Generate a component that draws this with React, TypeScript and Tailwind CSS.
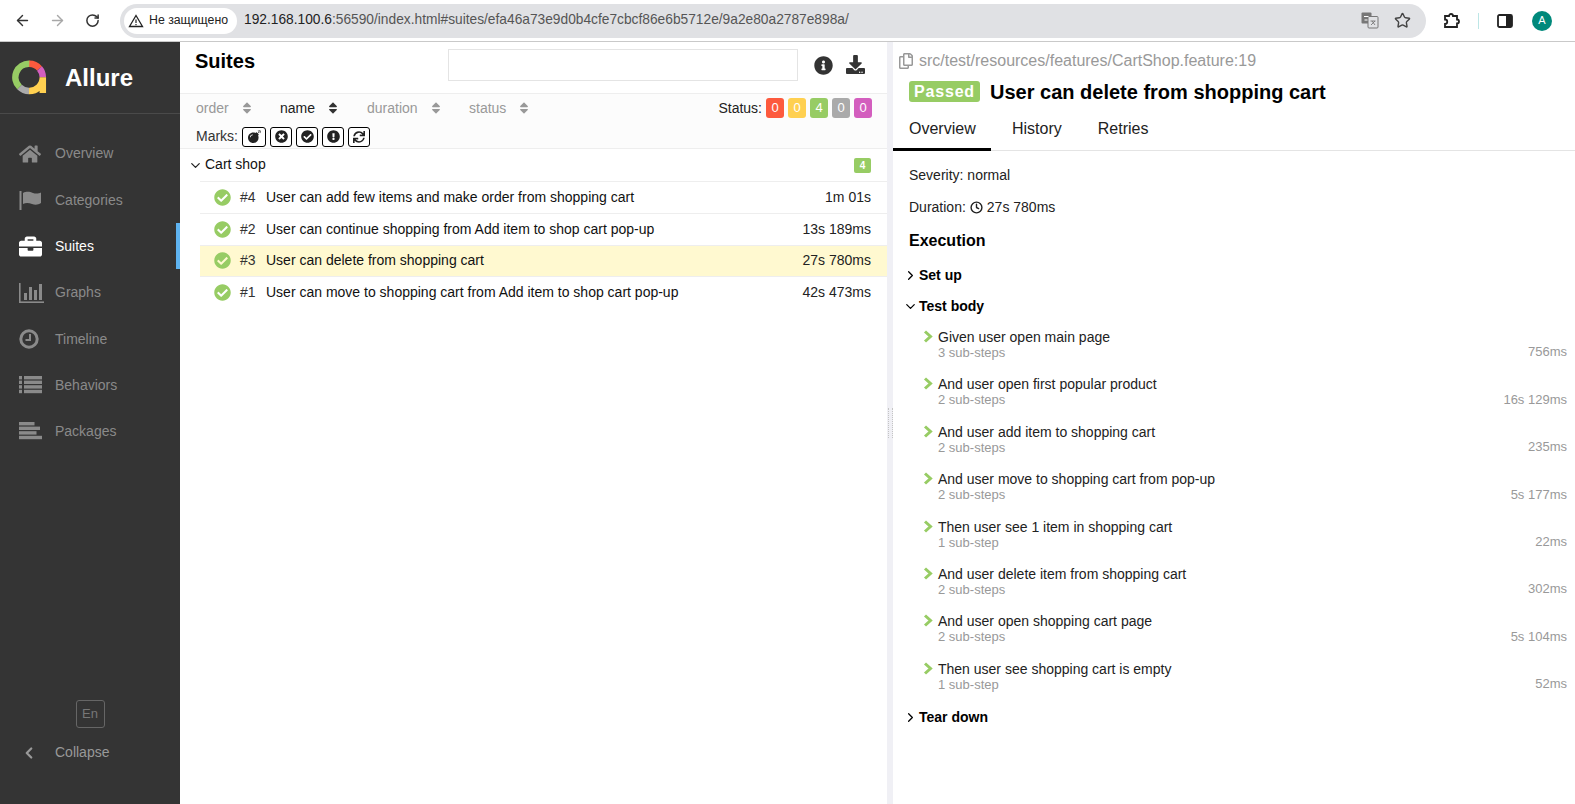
import React from "react";
import {
  FaHome, FaBriefcase, FaBomb, FaTimesCircle, FaCheckCircle, FaExclamationCircle, FaSync, FaInfoCircle,
  FaDownload, FaRegCopy, FaSort,
} from "react-icons/fa";
import { ArrowLeft, ArrowRight, RotateCw, Star, ChevronDown, ChevronRight, ChevronLeft, Clock } from "lucide-react";

const IconFlag = () => (
  <svg width="23" height="19" viewBox="0 0 23 19" fill="currentColor">
    <rect x="0.5" y="0" width="2" height="19" />
    <path d="M4 2 C8 0 11 1 14 2 C17 3 20 2.5 22 1.5 V12 C19 14 16 14 13 13 C10 12 7 11.5 4 13 Z" />
  </svg>
);
const IconGraph = () => (
  <svg width="26" height="20" viewBox="0 0 26 20" fill="currentColor">
    <rect x="0" y="0" width="1.6" height="20" />
    <rect x="0" y="18.4" width="25" height="1.6" />
    <rect x="5" y="10" width="3" height="7" />
    <rect x="10" y="4" width="3" height="13" />
    <rect x="15" y="7" width="3" height="10" />
    <rect x="20" y="1" width="3" height="16" />
  </svg>
);
const IconClock = () => (
  <svg width="20" height="20" viewBox="0 0 20 20" fill="none" stroke="currentColor">
    <circle cx="10" cy="10" r="8.2" strokeWidth="3" />
    <path d="M11 5 V11 H6.5" strokeWidth="2" />
  </svg>
);
const IconList = () => (
  <svg width="23" height="18" viewBox="0 0 23 18" fill="currentColor">
    {[0, 4.6, 9.2, 13.8].map((y) => (
      <g key={y}>
        <rect x="0" y={y} width="3" height="3.4" />
        <rect x="5" y={y} width="18" height="3.4" />
      </g>
    ))}
  </svg>
);
const IconPackages = () => (
  <svg width="23" height="18" viewBox="0 0 23 18" fill="currentColor">
    <rect x="0" y="0" width="15.5" height="3.4" />
    <rect x="0" y="4.6" width="21" height="3.4" />
    <rect x="0" y="9.2" width="17.5" height="3.4" />
    <rect x="0" y="13.8" width="23" height="3.4" />
  </svg>
);

const nav = [
  { label: "Overview", icon: <FaHome size={22} />, h: "h-[47px]" },
  { label: "Categories", icon: <IconFlag />, h: "h-[46px]" },
  { label: "Suites", icon: <FaBriefcase size={23} />, h: "h-[46px]", active: true },
  { label: "Graphs", icon: <IconGraph />, h: "h-[47px]" },
  { label: "Timeline", icon: <IconClock />, h: "h-[46px]" },
  { label: "Behaviors", icon: <IconList />, h: "h-[46px]" },
  { label: "Packages", icon: <IconPackages />, h: "h-[46px]" },
];

const tests = [
  { id: "#4", name: "User can add few items and make order from shopping cart", time: "1m 01s" },
  { id: "#2", name: "User can continue shopping from Add item to shop cart pop-up", time: "13s 189ms" },
  { id: "#3", name: "User can delete from shopping cart", time: "27s 780ms", selected: true },
  { id: "#1", name: "User can move to shopping cart from Add item to shop cart pop-up", time: "42s 473ms" },
];

const steps = [
  { name: "Given user open main page", sub: "3 sub-steps", time: "756ms" },
  { name: "And user open first popular product", sub: "2 sub-steps", time: "16s 129ms" },
  { name: "And user add item to shopping cart", sub: "2 sub-steps", time: "235ms" },
  { name: "And user move to shopping cart from pop-up", sub: "2 sub-steps", time: "5s 177ms" },
  { name: "Then user see 1 item in shopping cart", sub: "1 sub-step", time: "22ms" },
  { name: "And user delete item from shopping cart", sub: "2 sub-steps", time: "302ms" },
  { name: "And user open shopping cart page", sub: "2 sub-steps", time: "5s 104ms" },
  { name: "Then user see shopping cart is empty", sub: "1 sub-step", time: "52ms" },
];

const statuses = [
  ["0", "bg-[#fd5a3e]"],
  ["0", "bg-[#ffd050]"],
  ["4", "bg-[#97cc64]"],
  ["0", "bg-[#aaaaaa]"],
  ["0", "bg-[#d35ebe]"],
];

function Logo() {
  return (
    <svg width="36" height="36" viewBox="0 0 36 36" fill="none">
      <g strokeWidth="6.5" fill="none">
        <path d="M17 3.8 A13.5 13.5 0 0 1 27.5 8.5" stroke="#fd5a3e" />
        <path d="M27.5 8.5 A13.5 13.5 0 0 1 30.8 17.3" stroke="#d35ebe" />
        <path d="M17 31 A13.5 13.5 0 0 1 7.5 27" stroke="#aaaaaa" />
        <path d="M7.5 27 A13.5 13.5 0 0 1 17.3 3.8" stroke="#97cc64" />
        <path d="M17 31 A13.5 13.5 0 0 0 30.8 17.3 V33" stroke="#ffd050" />
      </g>
    </svg>
  );
}

function Mark({ Icon, size = 13, w = "w-[22px]" }: { Icon: React.ComponentType<{ size?: number }>; size?: number; w?: string }) {
  return (
    <span className={`flex h-[20px] items-center justify-center rounded-[3px] border border-black bg-white text-[#222] ${w}`}>
      <Icon size={size} />
    </span>
  );
}

function Sort({ label, dark, w }: { label: string; dark?: boolean; w: string }) {
  return (
    <div className={`flex items-center ${w} ${dark ? "text-[#222]" : "text-[#999]"}`}>
      <span>{label}</span>
      <FaSort size={14} className={`ml-[11px] ${dark ? "text-[#333]" : "text-[#999]"}`} />
    </div>
  );
}

const StepChevron = () => (
  <svg width="11" height="13" viewBox="0 0 11 13" fill="none" className="mr-[4px] mt-[1px] shrink-0" stroke="#97cc64" strokeWidth="3">
    <path d="M2 1.5 L7.5 6.5 L2 11.5" />
  </svg>
);

export default function App() {
  return (
    <div className="flex h-[804px] w-[1575px] flex-col overflow-hidden bg-white font-['Liberation_Sans',Arial,sans-serif] text-[14px] text-[#111]">
      {/* Browser toolbar */}
      <div className="flex h-[42px] shrink-0 items-center border-b border-[#c9c9c9] bg-white">
        <ArrowLeft size={17} strokeWidth={2} className="ml-[14px] text-[#333]" />
        <ArrowRight size={17} strokeWidth={2} className="ml-[18px] text-[#a8a8a8]" />
        <RotateCw size={15} strokeWidth={2.4} className="ml-[19px] text-[#333]" />
        <div className="ml-[20px] flex h-[34px] w-[1306px] items-center rounded-full bg-[#e0e1e4] pl-[4px] pr-[15px]">
          <div className="flex h-[26px] w-[113px] items-center rounded-full bg-white pl-[4px] text-[12.3px] text-[#222]">
            <svg width="16" height="14" viewBox="0 0 16 14" fill="none" className="mr-[5px]">
              <path d="M8 1.5 L14.5 12.5 H1.5 Z" stroke="#222" strokeWidth="1.3" />
              <path d="M8 5.5 V9 M8 10 V11.2" stroke="#222" strokeWidth="1.2" />
            </svg>
            <span className="whitespace-nowrap">Не защищено</span>
          </div>
          <div className="ml-[7px] text-[13.75px] text-[#555] whitespace-nowrap">
            <span className="text-[#222]">192.168.100.6</span>:56590/index.html#suites/efa46a73e9d0b4cfe7cbcf86e6b5712e/9a2e80a2787e898a/
          </div>
          <div className="ml-auto flex items-center">
            <svg width="18" height="17" viewBox="0 0 18 17">
              <rect x="0.5" y="0.5" width="10" height="11" rx="1" fill="#777" />
              <rect x="7" y="4.5" width="10" height="11.5" rx="1" fill="#e0e1e4" stroke="#777" />
              <path d="M3 4.5h4.5M3.5 8h3" stroke="#fff" strokeWidth="1" />
              <path d="M9.5 9h5M10 13l4-4M11 9l3 4" stroke="#777" strokeWidth="0.9" fill="none" />
            </svg>
            <Star size={17} strokeWidth={2} className="ml-[15px] text-[#444]" />
          </div>
        </div>
        <svg width="18" height="18" viewBox="0 0 18 18" fill="none" className="ml-[16px]" stroke="#222" strokeWidth="1.8">
          <path d="M3 4h4a2 2 0 0 1 4 0h4v3.5a2 2 0 0 1 0 4V15H3v-3a2 2 0 0 0 0-4.5z" />
        </svg>
        <div className="ml-[18px] h-[16px] w-[1px] bg-[#bde6e6]" />
        <svg width="16" height="14" viewBox="0 0 16 14" className="ml-[18px]">
          <rect x="1" y="1" width="14" height="12" rx="1.5" fill="#fff" stroke="#222" strokeWidth="1.8" />
          <rect x="9" y="1" width="6" height="12" fill="#222" />
        </svg>
        <div className="ml-[19px] flex h-[20px] w-[20px] items-center justify-center rounded-full bg-[#00897b] text-[11px] text-white">A</div>
      </div>

      <div className="flex min-h-0 flex-1">
        {/* Sidebar */}
        <aside className="flex w-[180px] shrink-0 flex-col bg-[#343434]">
          <div className="flex h-[72px] items-center border-b border-[#4a4a4a] pl-[12px]">
            <Logo />
            <span className="ml-[17px] text-[24px] font-bold text-white">Allure</span>
          </div>
          <nav className="mt-[16px] flex flex-col">
            {nav.map(({ label, icon, h, active }) => (
              <div key={label} className={`relative flex items-center pl-[19px] ${h} ${active ? "text-white" : "text-[#8a8a8a]"}`}>
                <span className="flex w-[36px] items-center">{icon}</span>
                <span className="text-[14px]">{label}</span>
                {active && <span className="absolute right-0 top-0 h-full w-[4px] bg-[#5eb3f0]" />}
              </div>
            ))}
          </nav>
          <div className="mt-auto flex flex-col pb-[41px]">
            <div className="mx-auto flex h-[28px] w-[29px] items-center justify-center rounded-[3px] border border-[#666] text-[13px] text-[#777]">En</div>
            <div className="mt-[14px] flex items-center pl-[20px] text-[14px] text-[#999]">
              <ChevronLeft size={18} strokeWidth={3} />
              <span className="ml-[17px]">Collapse</span>
            </div>
          </div>
        </aside>

        {/* Left pane */}
        <section className="flex w-[707px] shrink-0 flex-col">
          <div className="flex h-[52px] border-b border-[#eeeeee]">
            <h2 className="ml-[15px] mt-[7px] text-[20px] font-bold leading-[24px] text-black">Suites</h2>
            <div className="ml-[193px] mt-[7px] h-[32px] w-[350px] border border-[#e4e4e4]" />
            <FaInfoCircle size={19} className="ml-[16px] mt-[14px] text-[#333]" />
            <FaDownload size={19} className="ml-[13px] mt-[13px] text-[#333]" />
          </div>
          <div className="flex h-[55px] flex-col border-b border-[#eeeeee] bg-[#fcfcfc] pl-[16px] pr-[15px]">
            <div className="flex h-[28px] items-center text-[14px]">
              <Sort label="order" w="w-[84px]" />
              <Sort label="name" dark w="w-[87px]" />
              <Sort label="duration" w="w-[102px]" />
              <Sort label="status" w="w-[100px]" />
              <div className="ml-auto flex items-center gap-[4px]">
                <span className="text-[#222]">Status:</span>
                {statuses.map(([n, c], i) => (
                  <span key={i} className={`flex h-[20px] w-[18px] items-center justify-center rounded-[3px] text-[13px] text-white ${c}`}>{n}</span>
                ))}
              </div>
            </div>
            <div className="mt-[4px] flex items-center gap-[4px]">
              <span className="text-[#333]">Marks:</span>
              <Mark Icon={FaBomb} w="w-[24px]" />
              <Mark Icon={FaTimesCircle} />
              <Mark Icon={FaCheckCircle} />
              <Mark Icon={FaExclamationCircle} />
              <Mark Icon={FaSync} size={12} />
            </div>
          </div>
          <div className="flex h-[32px] items-center pl-[8px] pr-[16px]">
            <ChevronDown size={15} strokeWidth={2} className="text-[#222]" />
            <span className="ml-[2px] pb-[2px] text-[14px]">Cart shop</span>
            <span className="ml-auto flex h-[15px] w-[17px] items-center justify-center rounded-[2px] bg-[#97cc64] text-[10px] font-bold text-white">4</span>
          </div>
          <div className="ml-[20px] flex flex-col">
            {tests.map((t) => (
              <div key={t.id} className={`flex h-[31.8px] items-center border-t border-[#eeeeee] pl-[14px] pr-[16px] ${t.selected ? "bg-[#fff9d0]" : ""}`}>
                <FaCheckCircle size={17} className="text-[#97cc64]" />
                <span className="ml-[9px] w-[26px] text-[#333]">{t.id}</span>
                <span className="text-[14px] text-[#111]">{t.name}</span>
                <span className="ml-auto text-[14px] text-[#222]">{t.time}</span>
              </div>
            ))}
          </div>
        </section>

        {/* Splitter */}
        <div className="flex w-[6px] shrink-0 items-center justify-center bg-[#f0f0f5]">
          <div className="h-[30px] w-[5px] border-x border-dotted border-[#c4c4c4]" />
        </div>

        {/* Right pane */}
        <section className="flex min-w-0 flex-1 flex-col">
          <div className="ml-[5px] mt-[9px] flex items-center text-[16px] leading-[20px] text-[#999]">
            <FaRegCopy size={16} className="mr-[5px] text-[#999]" />
            src/test/resources/features/CartShop.feature:19
          </div>
          <div className="ml-[16px] mt-[8px] flex items-center">
            <span className="flex h-[21px] w-[71px] items-center justify-center rounded-[3px] bg-[#97cc64] text-[16px] font-bold tracking-[0.8px] text-white">Passed</span>
            <span className="ml-[10px] mt-[1px] text-[20px] font-bold leading-[24px] text-black">User can delete from shopping cart</span>
          </div>
          <div className="mt-[7px] flex h-[40px] border-b border-[#e4e4e4] text-[16px] text-[#222]">
            <div className="flex h-[40px] w-[98px] items-center border-b-[3px] border-black pl-[16px] pb-[1px]">Overview</div>
            <div className="ml-[21px] flex items-center pb-[3px]">History</div>
            <div className="ml-[36px] flex items-center pb-[3px]">Retries</div>
          </div>
          <div className="ml-[16px] mt-[16px] leading-[16px] text-[#222]">Severity: normal</div>
          <div className="ml-[16px] mt-[16px] flex items-center leading-[16px] text-[#222]">
            Duration:
            <Clock size={13} strokeWidth={2.6} className="mx-[4px] text-[#222]" />
            27s 780ms
          </div>
          <div className="ml-[16px] mt-[16px] text-[16px] font-bold leading-[20px] text-black">Execution</div>
          <div className="ml-[10px] mt-[16px] flex items-center text-[14px] font-bold leading-[16px] text-black">
            <ChevronRight size={15} strokeWidth={2} className="shrink-0" />
            <span className="ml-[1px]">Set up</span>
          </div>
          <div className="ml-[10px] mt-[15px] flex items-center text-[14px] font-bold leading-[16px] text-black">
            <ChevronDown size={15} strokeWidth={2} className="shrink-0" />
            <span className="ml-[1px]">Test body</span>
          </div>
          <div className="mt-[7px] flex flex-col">
            {steps.map((s) => (
              <div key={s.name} className="flex h-[47.4px] pl-[30px] pr-[8px] pt-[8px]">
                <StepChevron />
                <div className="flex flex-1 flex-col">
                  <span className="text-[14px] leading-[16px] text-[#222]">{s.name}</span>
                  <span className="text-[13px] leading-[15px] text-[#999]">{s.sub}</span>
                </div>
                <span className="self-end pb-[9px] text-[13px] leading-[15px] text-[#999]">{s.time}</span>
              </div>
            ))}
          </div>
          <div className="ml-[10px] mt-[9px] flex items-center text-[14px] font-bold leading-[16px] text-black">
            <ChevronRight size={15} strokeWidth={2} className="shrink-0" />
            <span className="ml-[1px]">Tear down</span>
          </div>
        </section>
      </div>
    </div>
  );
}
